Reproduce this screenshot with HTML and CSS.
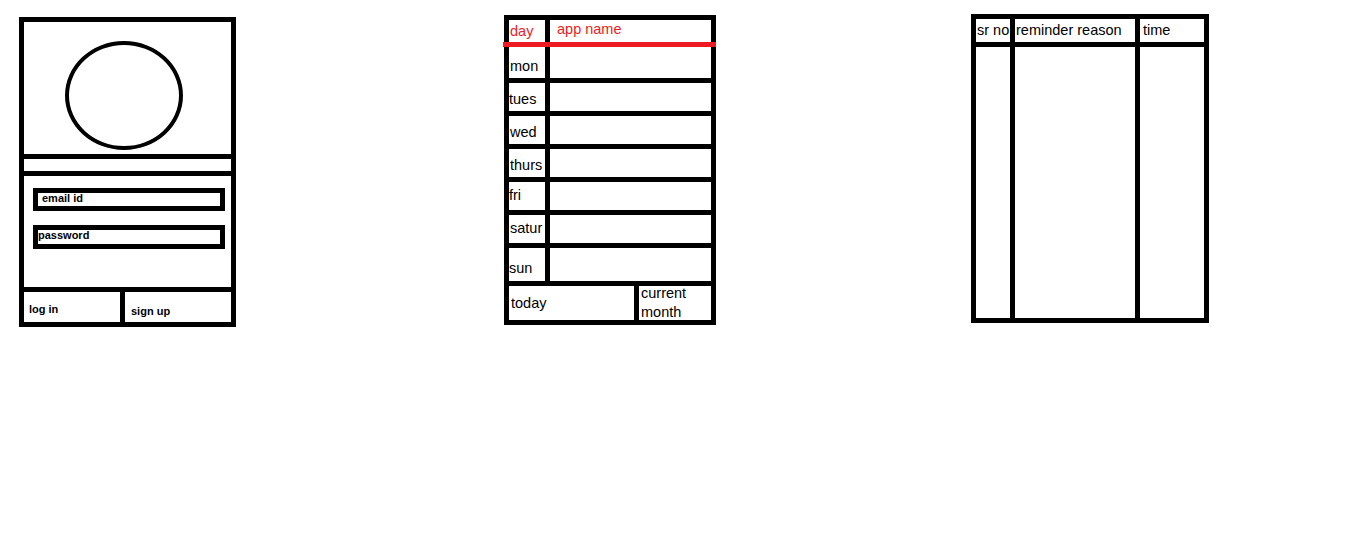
FILE: index.html
```html
<!DOCTYPE html>
<html lang="en">
<head>
    <meta charset="UTF-8">
    <title>App Wireframes</title>
    <link rel="stylesheet" href="styles.css">
</head>
<body>

    <!-- Login screen -->

    <div class="login">
        <div class="photo">
            <div class="avatar"></div>
        </div>
        <div class="strip"></div>
        <div class="form">
            <div class="field email">email id</div>
            <div class="field password">password</div>
        </div>
        <div class="buttons">
            <div class="btn login-btn">log in</div>
            <div class="btn signup-btn">sign up</div>
        </div>
    </div>

    <!-- Week screen -->

    <div class="week">
        <div class="row head">
            <div class="day">day</div>
            <div class="slot app-name">app name</div>
        </div>
        <div class="red-line"></div>
        <div class="row mon">
            <div class="day low">mon</div>
            <div class="slot"></div>
        </div>
        <div class="row">
            <div class="day tight">tues</div>
            <div class="slot"></div>
        </div>
        <div class="row">
            <div class="day">wed</div>
            <div class="slot"></div>
        </div>
        <div class="row">
            <div class="day">thurs</div>
            <div class="slot"></div>
        </div>
        <div class="row">
            <div class="day tight high">fri</div>
            <div class="slot"></div>
        </div>
        <div class="row">
            <div class="day high">satur</div>
            <div class="slot"></div>
        </div>
        <div class="row sun">
            <div class="day tight low">sun</div>
            <div class="slot"></div>
        </div>
        <div class="row foot">
            <div class="today">today</div>
            <div class="month">current<br>month</div>
        </div>
    </div>

    <!-- Reminder screen -->

    <div class="reminders">
        <div class="r-row r-head">
            <div class="col-sr">sr no</div>
            <div class="col-reason">reminder reason</div>
            <div class="col-time">time</div>
        </div>
        <div class="r-row r-body">
            <div class="col-sr"></div>
            <div class="col-reason"></div>
            <div class="col-time"></div>
        </div>
    </div>

</body>
</html>
```

FILE: styles.css
```css
*{
    margin: 0;
    padding: 0;
    box-sizing: border-box;
}

body{
    background: #fff;
    display: flex;
    align-items: flex-start;
    font-family: "Liberation Sans", Arial, sans-serif;
    color: #000;
    height: 551px;
}

/* login */

.login{
    margin-left: 19px;
    margin-top: 17px;
    width: 217px;
    height: 310px;
    border: 5px solid #000;
    display: flex;
    flex-direction: column;
}

.photo{
    height: 137px;
    border-bottom: 5px solid #000;
    padding-top: 19px;
    padding-left: 41px;
}

.avatar{
    width: 118px;
    height: 109px;
    border: 4px solid #000;
    border-radius: 50%;
}

.strip{
    height: 17px;
    border-bottom: 5px solid #000;
}

.form{
    height: 116px;
    border-bottom: 5px solid #000;
    padding-top: 12px;
    padding-left: 9px;
}

.field{
    width: 192px;
    border: 5px solid #000;
    font-size: 11px;
    font-weight: bold;
    line-height: 11px;
}

.email{
    height: 23px;
    padding-left: 4px;
}

.password{
    height: 24px;
    margin-top: 14px;
}

.buttons{
    display: flex;
    flex: 1;
}

.btn{
    font-size: 11px;
    font-weight: bold;
    line-height: 13px;
}

.login-btn{
    width: 101px;
    border-right: 5px solid #000;
    padding-left: 5px;
    padding-top: 11px;
}

.signup-btn{
    padding-left: 6px;
    padding-top: 13px;
}

/* week */

.week{
    margin-left: 268px;
    margin-top: 15px;
    width: 212px;
    height: 310px;
    border: 5px solid #000;
    display: flex;
    flex-direction: column;
    font-size: 14.5px;
}

.row{
    display: flex;
    height: 33px;
    border-bottom: 5px solid #000;
}

.day{
    width: 41px;
    border-right: 5px solid #000;
    display: flex;
    align-items: center;
    padding-left: 1px;
    padding-top: 3px;
    white-space: nowrap;
}

.day.tight{
    padding-left: 0;
}

.day.low{
    padding-top: 7px;
}

.day.high{
    padding-top: 0;
    padding-bottom: 2px;
}

.slot{
    flex: 1;
}

.head{
    height: 22px;
    border-bottom: none;
    color: #ed1c24;
}

.head .day{
    padding-top: 0;
}

.app-name{
    padding-left: 7px;
    padding-top: 1px;
    line-height: 16px;
}

.red-line{
    height: 5px;
    margin: 0 -5px 0 -6px;
    background: #ed1c24;
}

.row.mon{
    height: 36px;
}

.row.sun{
    height: 38px;
}

.row.foot{
    height: 34px;
    border-bottom: none;
}

.today{
    width: 130px;
    border-right: 5px solid #000;
    display: flex;
    align-items: center;
    padding-left: 2px;
}

.month{
    flex: 1;
    padding-left: 2px;
    line-height: 19px;
    margin-top: -2px;
}

/* reminders */

.reminders{
    margin-left: 255px;
    margin-top: 14px;
    width: 238px;
    height: 309px;
    border: 5px solid #000;
    display: flex;
    flex-direction: column;
    font-size: 14.5px;
}

.r-row{
    display: flex;
}

.r-head{
    height: 28px;
    border-bottom: 5px solid #000;
}

.r-body{
    flex: 1;
}

.col-sr{
    width: 39px;
    border-right: 5px solid #000;
    padding-left: 1px;
}

.col-reason{
    width: 125px;
    border-right: 5px solid #000;
    padding-left: 1px;
}

.col-time{
    flex: 1;
    padding-left: 3px;
}

.r-head div{
    display: flex;
    align-items: center;
    white-space: nowrap;
    padding-bottom: 2px;
    overflow: hidden;
}
```
